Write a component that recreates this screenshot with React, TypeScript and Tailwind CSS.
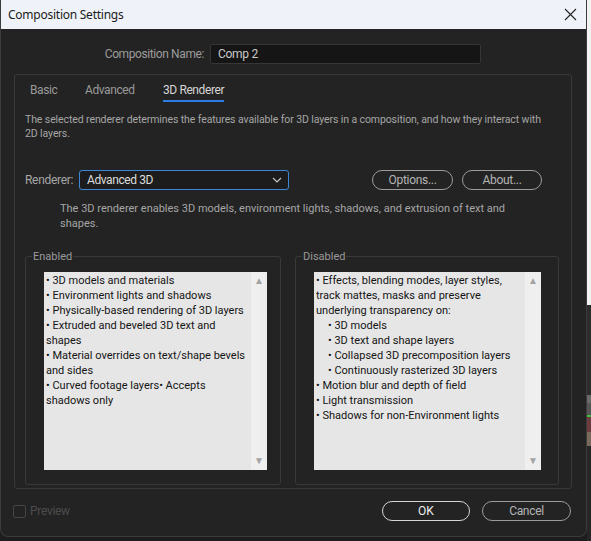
import React from "react";

const enabledItems = [
  "• 3D models and materials",
  "• Environment lights and shadows",
  "• Physically-based rendering of 3D layers",
  "• Extruded and beveled 3D text and shapes",
  "• Material overrides on text/shape bevels and sides",
  "• Curved footage layers• Accepts shadows only",
];

const disabledItems: { text: string; indent?: boolean }[] = [
  { text: "• Effects, blending modes, layer styles, track mattes, masks and preserve underlying transparency on:" },
  { text: "• 3D models", indent: true },
  { text: "• 3D text and shape layers", indent: true },
  { text: "• Collapsed 3D precomposition layers", indent: true },
  { text: "• Continuously rasterized 3D layers", indent: true },
  { text: "• Motion blur and depth of field" },
  { text: "• Light transmission" },
  { text: "• Shadows for non-Environment lights" },
];

function ListBox({ width, children }: { width: string; children: React.ReactNode }) {
  return (
    <div className={`flex h-[198px] bg-[#e6e6e6] ${width}`}>
      <div className="flex-1 pl-[2px] pt-[1px] text-[11px] leading-[15px] text-[#141414]">{children}</div>
      <div className="flex w-[16px] flex-col items-center justify-between bg-[#efefef] py-[3px] text-[10px] leading-[12px] text-[#a4a4a4]">
        <span>▲</span>
        <span>▼</span>
      </div>
    </div>
  );
}

export default function App() {
  return (
    <div className="flex h-[541px] w-[591px] overflow-hidden bg-[#1d1d1d] font-['Roboto',sans-serif]">
      <div className="flex h-[537px] w-[587px] flex-col overflow-hidden rounded-b-[8px] border-x border-b border-[#3c3c3c] bg-[#232323]">
        {/* title bar */}
        <div className="flex h-[29px] shrink-0 items-center justify-between bg-[#eff3f9] pl-[7px] pr-[8px]">
          <span className="font-['Noto_Sans',sans-serif] text-[12px] tracking-[-0.25px] text-[#1b1b1b]">Composition Settings</span>
          <svg width="13" height="13" viewBox="0 0 13 13" className="mr-[1px]">
            <path d="M1 1 L12 12 M12 1 L1 12" stroke="#222" strokeWidth="1.1" />
          </svg>
        </div>

        {/* composition name */}
        <div className="mt-[15px] flex items-center">
          <span className="w-[203px] text-right text-[12px] tracking-[-0.4px] text-[#9c9c9c]">Composition Name:</span>
          <div className="ml-[6px] flex h-[20px] w-[271px] items-center rounded-[2px] border border-[#363636] bg-[#151515] px-[7px] text-[12px] tracking-[-0.3px] text-[#c8c8c8]">
            Comp 2
          </div>
        </div>

        {/* tab panel */}
        <div className="ml-[13px] mt-[10px] flex h-[415px] w-[558px] flex-col rounded-[3px] border border-[#393939]">
          <div className="ml-[15px] mt-[6px] flex text-[12px] tracking-[-0.4px] text-[#9a9a9a]">
            <span className="w-[55px]">Basic</span>
            <span className="w-[78px]">Advanced</span>
            <span className="flex flex-col text-[#d6d6d6]">
              3D Renderer
              <span className="mt-[1px] h-[2px] w-full bg-[#2c7be5]" />
            </span>
          </div>

          <p className="ml-[10px] mt-[11px] w-[522px] text-[10.5px] leading-[14px] tracking-[-0.1px] text-[#a6a6a6]">
            The selected renderer determines the features available for 3D layers in a composition, and how they interact with 2D layers.
          </p>

          <div className="mt-[29px] flex items-center">
            <span className="ml-[10px] w-[54px] text-[12px] tracking-[-0.3px] text-[#a6a6a6]">Renderer:</span>
            <div className="flex h-[20px] w-[210px] items-center justify-between rounded-[3px] border border-[#3d86d8] bg-[#1c1c1c] pl-[7px] pr-[6px] text-[12px] tracking-[-0.4px] text-[#dcdcdc]">
              Advanced 3D
              <svg width="10" height="6" viewBox="0 0 10 6">
                <path d="M1 1 L5 5 L9 1" stroke="#c8c8c8" strokeWidth="1.1" fill="none" />
              </svg>
            </div>
            <button className="ml-[83px] h-[20px] w-[81px] rounded-full border border-[#9c9c9c] text-[12px] tracking-[-0.3px] text-[#b4b4b4]">
              Options...
            </button>
            <button className="ml-[9px] h-[20px] w-[80px] rounded-full border border-[#9c9c9c] text-[12px] tracking-[-0.3px] text-[#b4b4b4]">
              About...
            </button>
          </div>

          <p className="ml-[45px] mt-[11px] w-[470px] text-[11px] leading-[15px] text-[#a6a6a6]">
            The 3D renderer enables 3D models, environment lights, shadows, and extrusion of text and shapes.
          </p>

          <div className="ml-[10px] mt-[19px] flex gap-[14px]">
            <fieldset className="h-[235px] w-[256px] rounded-[3px] border border-[#393939] pl-[18px]">
              <legend className="ml-[-12px] px-[1px] text-[11px] leading-[13px] text-[#9a9a9a]">Enabled</legend>
              <div className="mt-[9px]">
                <ListBox width="w-[223px]">
                  {enabledItems.map((t) => (
                    <div key={t}>{t}</div>
                  ))}
                </ListBox>
              </div>
            </fieldset>
            <fieldset className="h-[235px] w-[264px] rounded-[3px] border border-[#393939] pl-[18px]">
              <legend className="ml-[-12px] px-[1px] text-[11px] leading-[13px] text-[#9a9a9a]">Disabled</legend>
              <div className="mt-[9px]">
                <ListBox width="w-[227px]">
                  {disabledItems.map((d) => (
                    <div key={d.text} className={d.indent ? "pl-[12px]" : ""}>
                      {d.text}
                    </div>
                  ))}
                </ListBox>
              </div>
            </fieldset>
          </div>
        </div>

        {/* footer */}
        <div className="mt-[12px] flex items-center justify-between pr-[15px]">
          <div className="flex items-center">
            <div className="ml-[12px] h-[13px] w-[13px] rounded-[2px] border border-[#454545]" />
            <span className="ml-[4px] text-[12px] tracking-[-0.3px] text-[#4c4c4c]">Preview</span>
          </div>
          <div className="flex gap-[12px]">
            <button className="h-[20px] w-[88px] rounded-full border border-[#d4d4d4] text-[12px] text-[#ececec]">
              OK
            </button>
            <button className="h-[20px] w-[89px] rounded-full border border-[#9c9c9c] text-[12px] tracking-[-0.3px] text-[#b4b4b4]">
              Cancel
            </button>
          </div>
        </div>
      </div>

      {/* background app peeking at the right */}
      <div className="flex w-[4px] flex-col">
        <div className="h-[305px] bg-[#f2f2f2]" />
        <div className="h-[90px] bg-[#2c2c2c]" />
        <div className="h-[8px] bg-[#6a6a6a]" />
        <div className="h-[12px] bg-[#555]" />
        <div className="h-[2px] bg-[#3fbf3f]" />
        <div className="h-[15px] bg-[#6b3b3f]" />
        <div className="h-[14px] bg-[#7a6a5c]" />
        <div className="flex-1 bg-[#262626]" />
      </div>
    </div>
  );
}
